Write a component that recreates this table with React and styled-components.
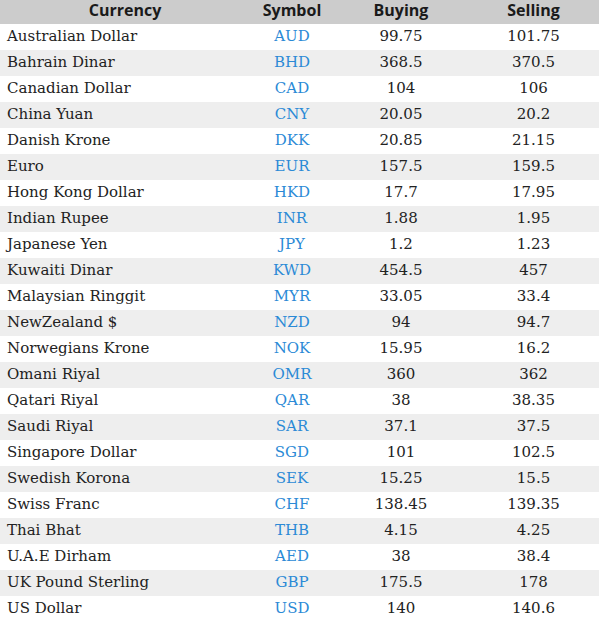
import React from "react";
import styled, { createGlobalStyle } from "styled-components";

const rates = [
  ["Australian Dollar", "AUD", "99.75", "101.75"],
  ["Bahrain Dinar", "BHD", "368.5", "370.5"],
  ["Canadian Dollar", "CAD", "104", "106"],
  ["China Yuan", "CNY", "20.05", "20.2"],
  ["Danish Krone", "DKK", "20.85", "21.15"],
  ["Euro", "EUR", "157.5", "159.5"],
  ["Hong Kong Dollar", "HKD", "17.7", "17.95"],
  ["Indian Rupee", "INR", "1.88", "1.95"],
  ["Japanese Yen", "JPY", "1.2", "1.23"],
  ["Kuwaiti Dinar", "KWD", "454.5", "457"],
  ["Malaysian Ringgit", "MYR", "33.05", "33.4"],
  ["NewZealand $", "NZD", "94", "94.7"],
  ["Norwegians Krone", "NOK", "15.95", "16.2"],
  ["Omani Riyal", "OMR", "360", "362"],
  ["Qatari Riyal", "QAR", "38", "38.35"],
  ["Saudi Riyal", "SAR", "37.1", "37.5"],
  ["Singapore Dollar", "SGD", "101", "102.5"],
  ["Swedish Korona", "SEK", "15.25", "15.5"],
  ["Swiss Franc", "CHF", "138.45", "139.35"],
  ["Thai Bhat", "THB", "4.15", "4.25"],
  ["U.A.E Dirham", "AED", "38", "38.4"],
  ["UK Pound Sterling", "GBP", "175.5", "178"],
  ["US Dollar", "USD", "140", "140.6"],
];

const GlobalStyle = createGlobalStyle`
  body {
    margin: 0;
    background: #fff;
  }
`;

const Table = styled.table`
  width: 599px;
  border-collapse: collapse;
  border-spacing: 0;
  table-layout: fixed;
  font-family: "DejaVu Serif", "Liberation Serif", serif;
  font-size: 15px;
  color: #222;
`;

const HeadCell = styled.th`
  height: 24px;
  line-height: 20px;
  padding: 0 0 4px;
  box-sizing: border-box;
  background: #cccccc;
  font-family: "Open Sans", "DejaVu Sans", sans-serif;
  font-weight: 700;
  font-size: 16px;
  color: #1a1a1a;
  text-align: center;
  vertical-align: middle;
`;

const Row = styled.tr`
  background: ${(p) => (p.$striped ? "#eeeeee" : "#ffffff")};
`;

const Cell = styled.td`
  height: 26px;
  line-height: 24px;
  box-sizing: border-box;
  padding: 0 0 2px ${(p) => (p.$left ? "7px" : "0")};
  text-align: ${(p) => (p.$left ? "left" : "center")};
  color: ${(p) => (p.$symbol ? "#2b8ad6" : "#222")};
  vertical-align: middle;
  white-space: nowrap;
`;

export default function App() {
  return (
    <>
      <GlobalStyle />
      <Table>
        <colgroup>
          <col style={{ width: 250 }} />
          <col style={{ width: 84 }} />
          <col style={{ width: 134 }} />
          <col style={{ width: 131 }} />
        </colgroup>
        <thead>
          <tr>
            <HeadCell>Currency</HeadCell>
            <HeadCell>Symbol</HeadCell>
            <HeadCell>Buying</HeadCell>
            <HeadCell>Selling</HeadCell>
          </tr>
        </thead>
        <tbody>
          {rates.map(([name, code, buy, sell], i) => (
            <Row key={code} $striped={i % 2 === 1}>
              <Cell $left>{name}</Cell>
              <Cell $symbol>{code}</Cell>
              <Cell>{buy}</Cell>
              <Cell>{sell}</Cell>
            </Row>
          ))}
        </tbody>
      </Table>
    </>
  );
}
